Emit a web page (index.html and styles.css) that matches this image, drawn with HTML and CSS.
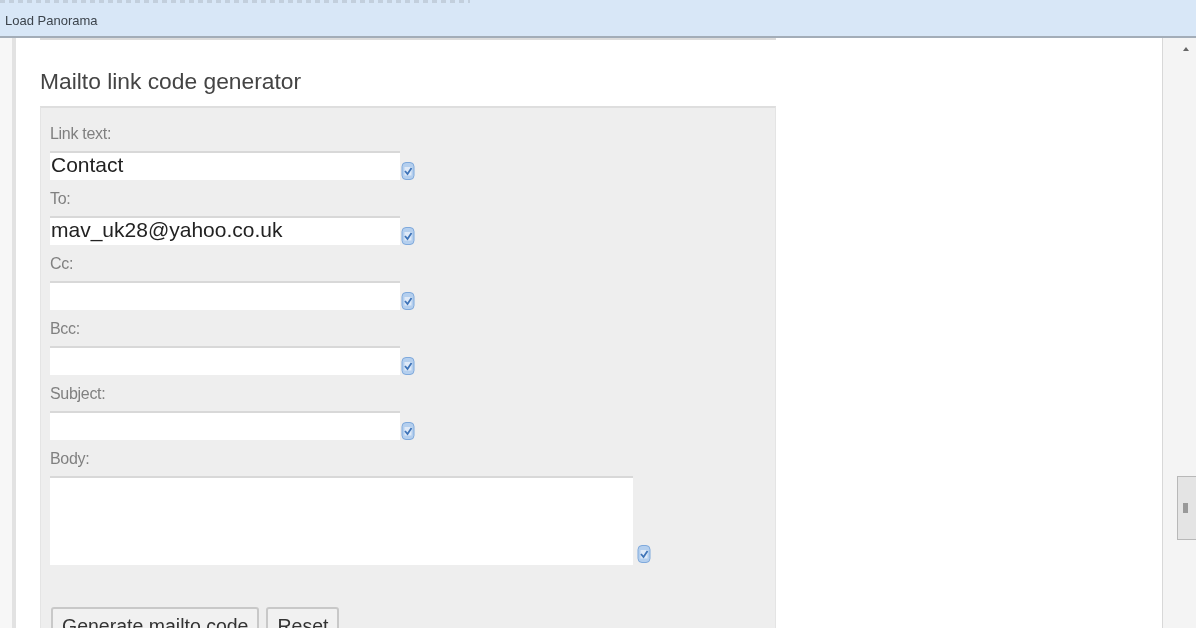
FILE: index.html
```html
<!DOCTYPE html>
<html>
    <head>
        <title>Mailto link code generator</title>
        <meta charset="utf-8">
        <link rel="stylesheet" href="styles.css">
    </head>
    <body>
        <svg class="defs">
            <symbol id="check" viewBox="0 0 14 20">
                <rect x="1" y="1.500" width="12" height="17" rx="4" fill="#b4cfee" stroke="#7fa9dc"/>
                <rect x="3.500" y="6" width="7" height="8.500" fill="#dfeaf8"/>
                <path d="M4 10l2.500 3 4-6" fill="none" stroke="#3f74b8" stroke-width="1.800"/>
            </symbol>
        </svg>
        <header class="toolbar">
            <div class="cutoff"></div>
            <div class="toolbar-label">Load Panorama</div>
        </header>
        <div class="window">
            <div class="edge"></div>
            <section class="page">
                <div class="page-rule"></div>
                <h1>Mailto link code generator</h1>
                <form class="panel">
                    <div class="field">
                        <label>Link text:</label>
                        <div class="row">
                            <input type="text" class="text" value="Contact">
                            <svg class="check"><use href="#check"/></svg>
                        </div>
                    </div>
                    <div class="field">
                        <label>To:</label>
                        <div class="row">
                            <input type="text" class="text" value="mav_uk28@yahoo.co.uk">
                            <svg class="check"><use href="#check"/></svg>
                        </div>
                    </div>
                    <div class="field">
                        <label>Cc:</label>
                        <div class="row">
                            <input type="text" class="text">
                            <svg class="check"><use href="#check"/></svg>
                        </div>
                    </div>
                    <div class="field">
                        <label>Bcc:</label>
                        <div class="row">
                            <input type="text" class="text">
                            <svg class="check"><use href="#check"/></svg>
                        </div>
                    </div>
                    <div class="field">
                        <label>Subject:</label>
                        <div class="row">
                            <input type="text" class="text">
                            <svg class="check"><use href="#check"/></svg>
                        </div>
                    </div>
                    <div class="field-body">
                        <label>Body:</label>
                        <div class="row">
                            <textarea class="body-text"></textarea>
                            <svg class="check"><use href="#check"/></svg>
                        </div>
                    </div>
                    <div class="buttons">
                        <button type="button" class="button">Generate mailto code</button>
                        <button type="button" class="button">Reset</button>
                    </div>
                </form>
            </section>
            <aside class="scrollbar">
                <div class="arrow"></div>
                <div class="thumb"><div class="grip"></div></div>
            </aside>
        </div>
    </body>
</html>
```

FILE: styles.css
```css
html, body{
    height: 100%;
    margin: 0;
    overflow: hidden;
    background-color: white;
}
body{
    display: flex;
    flex-direction: column;
    font-family: "Liberation Sans", Arial, sans-serif;
    color: #444;
    filter: blur(0.6px);
}
.defs{
    display: none;
}
.toolbar{
    height: 36px;
    flex: none;
    background-color: #d8e7f7;
    border-bottom: 2px solid #a3adb8;
}
.cutoff{
    width: 470px;
    height: 3px;
    background: repeating-linear-gradient(90deg, #b4bfcb 0, #b4bfcb 5px, #d8e7f7 5px, #d8e7f7 9px);
    opacity: 0.6;
}
.toolbar-label{
    margin: 11px 0 0 5px;
    font-size: 13px;
    line-height: 14px;
    color: #3c444c;
}
.window{
    flex: 1;
    display: flex;
    min-height: 0;
}
.edge{
    width: 12px;
    flex: none;
    background-color: #f7f7f7;
    border-right: 4px solid #e2e2e2;
}
.page{
    flex: 1;
    padding-left: 24px;
    min-width: 0;
}
.page-rule{
    width: 736px;
    height: 2px;
    background-color: #dcdcdc;
}
h1{
    margin: 28px 0 12px 0;
    font-size: 22.8px;
    font-weight: normal;
    line-height: 26px;
    color: #444;
}
.panel{
    width: 725px;
    padding: 19px 0 10px 9px;
    background-color: #eeeeee;
    border: 1px solid #e4e4e4;
    border-top: 2px solid #dedede;
}
.field{
    height: 65px;
}
label{
    display: block;
    height: 24px;
    font-size: 16px;
    line-height: 14px;
    letter-spacing: -0.3px;
    color: #808080;
}
.row{
    display: flex;
    align-items: flex-end;
}
.text{
    width: 350px;
    height: 29px;
    padding: 0 0 3px 1px;
    box-sizing: border-box;
    background-color: white;
    border: none;
    border-top: 2px solid #d8d8d8;
    font-family: "Liberation Sans", Arial, sans-serif;
    font-size: 21px;
    color: #222;
}
.body-text{
    display: block;
    width: 583px;
    height: 89px;
    padding: 0;
    box-sizing: border-box;
    background-color: white;
    border: none;
    border-top: 2px solid #d8d8d8;
    resize: none;
}
.check{
    width: 14px;
    height: 20px;
    flex: none;
    margin-left: 1px;
    margin-bottom: -1px;
}
.body-text + .check{
    margin-left: 4px;
    margin-bottom: 1px;
}
.buttons{
    display: flex;
    gap: 7px;
    margin-top: 42px;
    margin-left: 1px;
}
.button{
    height: 38px;
    padding: 0 9px;
    background-color: #f1f1f1;
    border: 2px solid #c8c8c8;
    border-radius: 3px;
    font-family: "Liberation Sans", Arial, sans-serif;
    font-size: 19.5px;
    color: #333;
}
.scrollbar{
    width: 33px;
    flex: none;
    position: relative;
    background-color: #f4f4f4;
    border-left: 1px solid #d8d8d8;
}
.arrow{
    position: absolute;
    left: 20px;
    top: 9px;
    width: 0;
    height: 0;
    border-left: 3px solid transparent;
    border-right: 3px solid transparent;
    border-bottom: 4px solid #666;
}
.thumb{
    position: absolute;
    left: 14px;
    top: 438px;
    width: 19px;
    height: 64px;
    background-color: #e4e4e4;
    border: 1px solid #b8b8b8;
    border-right: none;
    box-sizing: border-box;
}
.grip{
    width: 5px;
    height: 10px;
    margin: 26px 0 0 5px;
    background-color: #999;
}
```
